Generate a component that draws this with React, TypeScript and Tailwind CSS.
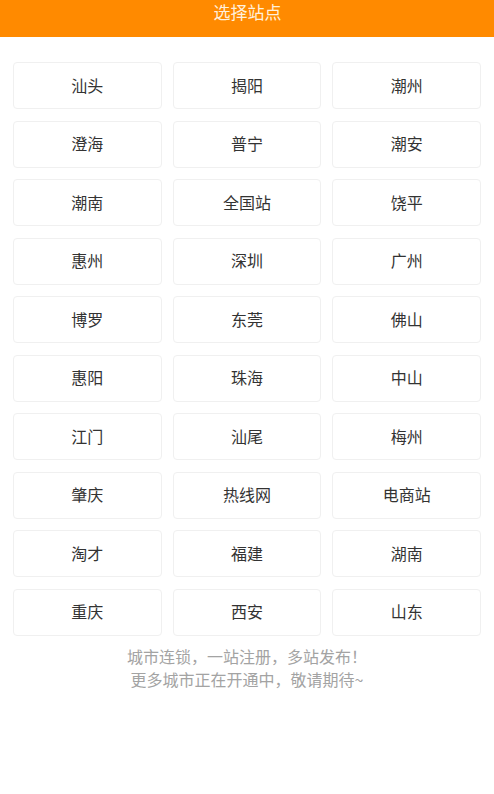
const cities = [
  "汕头", "揭阳", "潮州",
  "澄海", "普宁", "潮安",
  "潮南", "全国站", "饶平",
  "惠州", "深圳", "广州",
  "博罗", "东莞", "佛山",
  "惠阳", "珠海", "中山",
  "江门", "汕尾", "梅州",
  "肇庆", "热线网", "电商站",
  "淘才", "福建", "湖南",
  "重庆", "西安", "山东",
];

export default function App() {
  return (
    <div
      className="min-h-[794px] w-full bg-white"
      style={{ fontFamily: '"Noto Sans CJK SC", "Noto Sans", sans-serif' }}
    >
      <header className="h-[37px] bg-[#ff8a00] pl-px">
        <h1 className="text-center text-[17px] leading-[24px] text-[#fff0dc]">
          选择站点
        </h1>
      </header>

      <div className="grid grid-cols-3 gap-x-[11px] gap-y-[11.5px] px-[13px] pt-[25px]">
        {cities.map((city) => (
          <button
            key={city}
            className="h-[47px] rounded-[4px] border border-[#f0f0f0] bg-white pb-[2px] text-[16px] text-[#333333]"
          >
            {city}
          </button>
        ))}
      </div>

      <div className="mt-[9px] text-center text-[16px] leading-[23px] text-[#a3a3a3]">
        <p>城市连锁，一站注册，多站发布！</p>
        <p>更多城市正在开通中，敬请期待~</p>
      </div>
    </div>
  );
}
